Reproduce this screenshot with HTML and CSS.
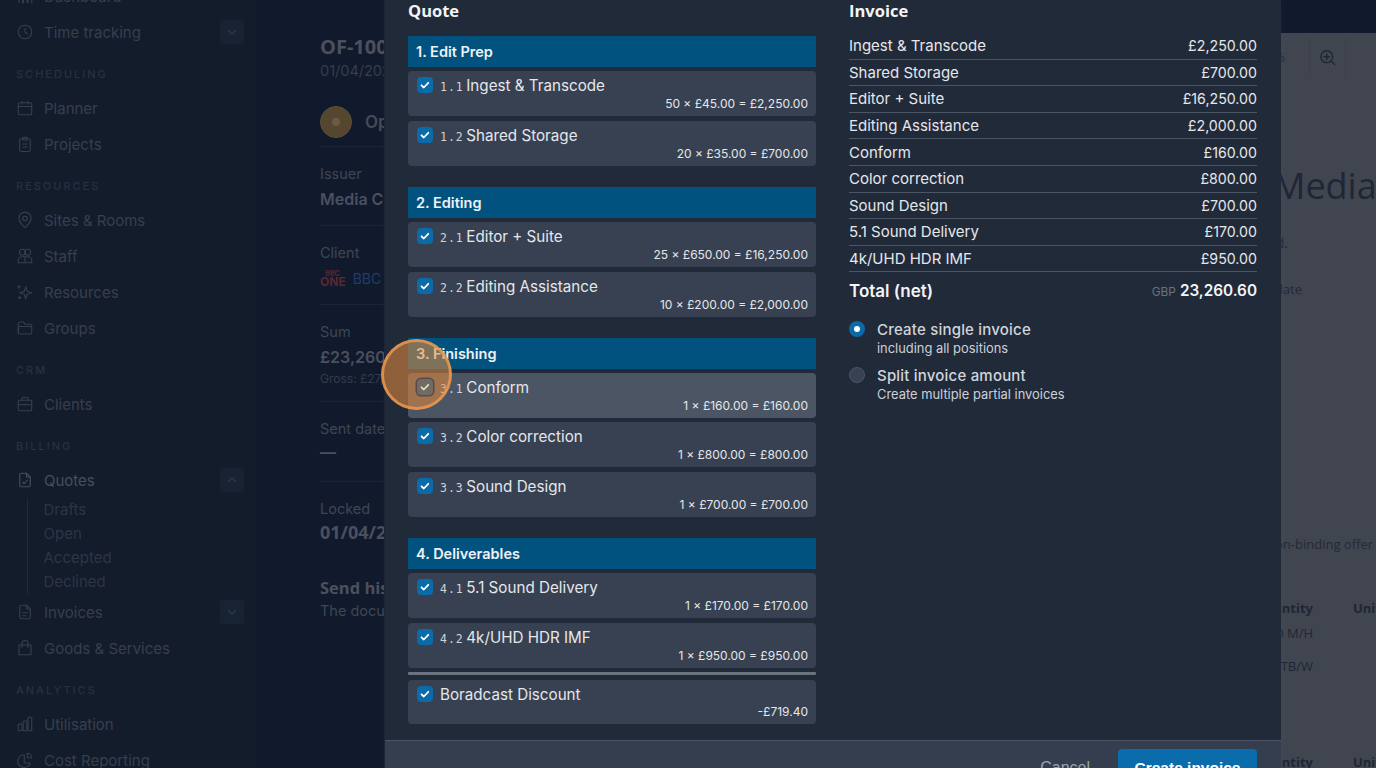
FILE: index.html
```html
<!DOCTYPE html>
<html lang="en">
<head>
<meta charset="utf-8">
<title>Create invoice</title>
<link rel="stylesheet" href="styles.css">
</head>
<body>
<div class="app">
  <aside class="sidebar">
    <div class="nav-item"><svg class="ico" viewBox="0 0 24 24"><path d="M4 21V10h5v11M10 21V4h5v17M16 21v-8h5v8"/></svg><span>Dashboard</span></div>
    <div class="nav-item"><svg class="ico" viewBox="0 0 24 24"><circle cx="12" cy="12" r="9"/><path d="M12 7v5l3 2"/></svg><span>Time tracking</span><b class="chev"><svg viewBox="0 0 24 24"><path d="M8 10l4 4 4-4"/></svg></b></div>
    <div class="nav-label">SCHEDULING</div>
    <div class="nav-item"><svg class="ico" viewBox="0 0 24 24"><rect x="3" y="5" width="18" height="16" rx="2"/><path d="M3 10h18M8 3v4M16 3v4"/></svg><span>Planner</span></div>
    <div class="nav-item"><svg class="ico" viewBox="0 0 24 24"><rect x="5" y="5" width="14" height="17" rx="2"/><rect x="9" y="3" width="6" height="4" rx="1"/><path d="M9 12h6M9 16h6"/></svg><span>Projects</span></div>
    <div class="nav-label">RESOURCES</div>
    <div class="nav-item"><svg class="ico" viewBox="0 0 24 24"><path d="M12 22s-8-7-8-12.5a8 8 0 0 1 16 0C20 15 12 22 12 22z"/><circle cx="12" cy="10" r="3"/></svg><span>Sites &amp; Rooms</span></div>
    <div class="nav-item"><svg class="ico" viewBox="0 0 24 24"><circle cx="8.5" cy="7" r="4"/><circle cx="15.5" cy="7" r="4"/><path d="M3 21v-3a5 5 0 0 1 5-5h8a5 5 0 0 1 5 5v3zM12 13v8"/></svg><span>Staff</span></div>
    <div class="nav-item"><svg class="ico" viewBox="0 0 24 24"><path d="M13 5l2 6 6 2-6 2-2 6-2-6-6-2 6-2z"/><path d="M4 3v4M2 5h4M5 18v3M3.5 19.5h3"/></svg><span>Resources</span></div>
    <div class="nav-item"><svg class="ico" viewBox="0 0 24 24"><path d="M3 18V6a2 2 0 0 1 2-2h5l2 3h7a2 2 0 0 1 2 2v1"/><rect x="3" y="10" width="18" height="10" rx="2"/></svg><span>Groups</span></div>
    <div class="nav-label">CRM</div>
    <div class="nav-item"><svg class="ico" viewBox="0 0 24 24"><rect x="3" y="7" width="18" height="14" rx="2"/><path d="M8 7V5a2 2 0 0 1 2-2h4a2 2 0 0 1 2 2v2M3 13h18"/><path d="M11 13h2"/></svg><span>Clients</span></div>
    <div class="nav-label">BILLING</div>
    <div class="nav-item nav-active"><svg class="ico" viewBox="0 0 24 24"><path d="M14 3H7a2 2 0 0 0-2 2v14a2 2 0 0 0 2 2h10a2 2 0 0 0 2-2V8z"/><path d="M14 3v5h5M9 15l2 2 4-5"/></svg><span>Quotes</span><b class="chev"><svg viewBox="0 0 24 24"><path d="M8 14l4-4 4 4"/></svg></b></div>
    <div class="sub-list">
      <div class="sub-item">Drafts</div>
      <div class="sub-item">Open</div>
      <div class="sub-item">Accepted</div>
      <div class="sub-item">Declined</div>
    </div>
    <div class="nav-item"><svg class="ico" viewBox="0 0 24 24"><path d="M14 3H7a2 2 0 0 0-2 2v14a2 2 0 0 0 2 2h10a2 2 0 0 0 2-2V8z"/><path d="M14 3v5h5M9 13h6M9 17h4"/></svg><span>Invoices</span><b class="chev"><svg viewBox="0 0 24 24"><path d="M8 10l4 4 4-4"/></svg></b></div>
    <div class="nav-item"><svg class="ico" viewBox="0 0 24 24"><path d="M4 8h16v13H4zM8 11V6a4 4 0 0 1 8 0v5"/></svg><span>Goods &amp; Services</span></div>
    <div class="nav-label">ANALYTICS</div>
    <div class="nav-item"><svg class="ico" viewBox="0 0 24 24"><rect x="3" y="12" width="5" height="9" rx="1"/><rect x="9.5" y="8" width="5" height="13" rx="1"/><rect x="16" y="3" width="5" height="18" rx="1"/></svg><span>Utilisation</span></div>
    <div class="nav-item"><svg class="ico" viewBox="0 0 24 24"><path d="M11 5a8.500 8.500 0 1 0 8 11h-8z"/><path d="M15 3a6 6 0 0 1 6 6h-6z"/></svg><span>Cost Reporting</span></div>
  </aside>

  <section class="details">
    <h1 class="d-title">OF-1001</h1>
    <div class="d-date">01/04/2024</div>
    <div class="d-status"><i class="avatar"><i class="avatar-dot"></i></i><span>Open</span></div>
    <div class="d-block"><div class="d-label">Issuer</div><div class="d-value">Media Company</div></div>
    <div class="d-block"><div class="d-label">Client</div><div class="d-logos"><span class="logo-one"><em>BBC</em>ONE</span><span class="logo-bbc">BBC One</span></div></div>
    <div class="d-block d-sum"><div class="d-label">Sum</div><div class="d-value">£23,260.60</div><div class="d-small">Gross: £27,912.72</div></div>
    <div class="d-block d-sent"><div class="d-label">Sent date</div><div class="d-value d-dash">—</div></div>
    <div class="d-locked"><div class="d-label">Locked</div><div class="d-open d-date-big">01/04/2024</div></div>
    <div class="d-history"><div class="d-open">Send history</div><div class="d-label">The document</div></div>
  </section>

  <section class="doc">
    <div class="doc-top"></div>
    <div class="doc-tools">
      <span class="tool-pct">100%</span>
      <span class="tool-zoom"><svg viewBox="0 0 24 24"><circle cx="11" cy="11" r="7.500"/><path d="M11 7.500v7M7.500 11h7M16.500 16.500L21 21"/></svg></span>
    </div>
    <div class="doc-name">Media Company</div>
    <div class="doc-line doc-l1">Company Ltd.</div>
    <div class="doc-line doc-l2">Quote date</div>
    <div class="doc-line doc-l3">This is a non-binding offer</div>
    <div class="doc-table">
      <div class="doc-row doc-head"><span>Quantity</span><span>Unit price</span></div>
      <div class="doc-row doc-r1"><span>50 M/H</span><span></span></div>
      <div class="doc-row doc-r2"><span>20 TB/W</span><span></span></div>
      <div class="doc-row doc-head doc-h2"><span>Quantity</span><span>Unit price</span></div>
    </div>
  </section>
</div>

<div class="modal">
  <div class="modal-body">
    <div class="col-quote">
      <h2 class="col-title">Quote</h2>

      <div class="group">
        <div class="group-head">1. Edit Prep</div>
        <div class="line"><i class="cb"><svg viewBox="0 0 16 16"><path d="M4.500 8.300l2.300 2.200 4.500-4.700"/></svg></i><div class="line-main"><code>1.1</code>Ingest &amp; Transcode</div><div class="line-amt">50 × £45.00 = £2,250.00</div></div>
        <div class="line"><i class="cb"><svg viewBox="0 0 16 16"><path d="M4.500 8.300l2.300 2.200 4.500-4.700"/></svg></i><div class="line-main"><code>1.2</code>Shared Storage</div><div class="line-amt">20 × £35.00 = £700.00</div></div>
      </div>

      <div class="group">
        <div class="group-head">2. Editing</div>
        <div class="line"><i class="cb"><svg viewBox="0 0 16 16"><path d="M4.500 8.300l2.300 2.200 4.500-4.700"/></svg></i><div class="line-main"><code>2.1</code>Editor + Suite</div><div class="line-amt">25 × £650.00 = £16,250.00</div></div>
        <div class="line"><i class="cb"><svg viewBox="0 0 16 16"><path d="M4.500 8.300l2.300 2.200 4.500-4.700"/></svg></i><div class="line-main"><code>2.2</code>Editing Assistance</div><div class="line-amt">10 × £200.00 = £2,000.00</div></div>
      </div>

      <div class="group">
        <div class="group-head">3. Finishing</div>
        <div class="line line-hover"><i class="cb cb-focus"><svg viewBox="0 0 16 16"><path d="M4.500 8.300l2.300 2.200 4.500-4.700"/></svg></i><div class="line-main"><code>3.1</code>Conform</div><div class="line-amt">1 × £160.00 = £160.00</div></div>
        <div class="line"><i class="cb"><svg viewBox="0 0 16 16"><path d="M4.500 8.300l2.300 2.200 4.500-4.700"/></svg></i><div class="line-main"><code>3.2</code>Color correction</div><div class="line-amt">1 × £800.00 = £800.00</div></div>
        <div class="line"><i class="cb"><svg viewBox="0 0 16 16"><path d="M4.500 8.300l2.300 2.200 4.500-4.700"/></svg></i><div class="line-main"><code>3.3</code>Sound Design</div><div class="line-amt">1 × £700.00 = £700.00</div></div>
      </div>

      <div class="group">
        <div class="group-head">4. Deliverables</div>
        <div class="line"><i class="cb"><svg viewBox="0 0 16 16"><path d="M4.500 8.300l2.300 2.200 4.500-4.700"/></svg></i><div class="line-main"><code>4.1</code>5.1 Sound Delivery</div><div class="line-amt">1 × £170.00 = £170.00</div></div>
        <div class="line"><i class="cb"><svg viewBox="0 0 16 16"><path d="M4.500 8.300l2.300 2.200 4.500-4.700"/></svg></i><div class="line-main"><code>4.2</code>4k/UHD HDR IMF</div><div class="line-amt">1 × £950.00 = £950.00</div></div>
      </div>

      <div class="group-rule"></div>
      <div class="line"><i class="cb"><svg viewBox="0 0 16 16"><path d="M4.500 8.300l2.300 2.200 4.500-4.700"/></svg></i><div class="line-main">Boradcast Discount</div><div class="line-amt">-£719.40</div></div>
    </div>

    <div class="col-invoice">
      <h2 class="col-title">Invoice</h2>
      <div class="inv-rows">
        <div class="inv-row"><span>Ingest &amp; Transcode</span><span class="inv-amt">£2,250.00</span></div>
        <div class="inv-row"><span>Shared Storage</span><span class="inv-amt">£700.00</span></div>
        <div class="inv-row"><span>Editor + Suite</span><span class="inv-amt">£16,250.00</span></div>
        <div class="inv-row"><span>Editing Assistance</span><span class="inv-amt">£2,000.00</span></div>
        <div class="inv-row"><span>Conform</span><span class="inv-amt">£160.00</span></div>
        <div class="inv-row"><span>Color correction</span><span class="inv-amt">£800.00</span></div>
        <div class="inv-row"><span>Sound Design</span><span class="inv-amt">£700.00</span></div>
        <div class="inv-row"><span>5.1 Sound Delivery</span><span class="inv-amt">£170.00</span></div>
        <div class="inv-row"><span>4k/UHD HDR IMF</span><span class="inv-amt">£950.00</span></div>
      </div>
      <div class="inv-total"><span>Total (net)</span><span class="inv-sum"><small>GBP</small>23,260.60</span></div>
      <div class="opt">
        <i class="radio radio-on"></i>
        <div><div class="opt-title">Create single invoice</div><div class="opt-sub">including all positions</div></div>
      </div>
      <div class="opt">
        <i class="radio"></i>
        <div><div class="opt-title">Split invoice amount</div><div class="opt-sub">Create multiple partial invoices</div></div>
      </div>
    </div>
  </div>
  <div class="modal-foot">
    <span class="btn-cancel">Cancel</span>
    <span class="btn-primary">Create invoice</span>
  </div>
</div>

<div class="cursor-ring"></div>
</body>
</html>
```
FILE: styles.css
```css
* { box-sizing: border-box; }
html, body { margin: 0; padding: 0; width: 1376px; height: 768px; overflow: hidden; background: #111a2c; }
body { position: relative; font-family: Inter, "Noto Sans", sans-serif; }

.app { display: flex; height: 768px; overflow: hidden; }

/* sidebar */
.sidebar { flex: 0 0 256px; background: #131c2b; margin-top: -22px; height: 790px; padding: 0 12px 0 16px; color: #373f4e; font-size: 15px; }
.nav-item { height: 36px; display: flex; align-items: center; gap: 10px; position: relative; }
.nav-active { color: #474e5c; }
.ico { width: 18px; height: 18px; flex: none; fill: none; stroke: #373f4e; stroke-width: 1.5; stroke-linecap: round; stroke-linejoin: round; }
.nav-active .ico { stroke: #474e5c; }
.chev { position: absolute; left: 204px; top: 6px; width: 24px; height: 24px; background: #172232; border-radius: 3px; }
.chev svg { display: block; width: 24px; height: 24px; fill: none; stroke: #2e3948; stroke-width: 1.5; }
.nav-label { height: 40px; padding-top: 16px; font-size: 11px; line-height: 16px; letter-spacing: 2px; color: #283141; font-weight: 500; }
.sub-list { margin-left: 11px; border-left: 1.500px solid #212a39; padding-left: 15.500px; }
.sub-item { height: 24px; line-height: 24px; color: #2d3545; }

/* details column */
.details { flex: 0 0 129px; background: #111a2d; padding: 34px 0 0 64px; color: #3f4653; overflow: hidden; white-space: nowrap; font-size: 14.500px; }
.d-title { margin: 0; font-family: "Open Sans", sans-serif; font-size: 20px; line-height: 26px; font-weight: 700; color: #4a505e; }
.d-date { font-size: 14.500px; line-height: 22px; color: #363d4b; }
.d-status { display: flex; align-items: center; gap: 13px; margin-top: 16px; font-weight: 600; font-size: 17px; color: #454b58; height: 48px; box-sizing: content-box; border-bottom: 1px solid #1b2434; width: 300px; }
.avatar { width: 32px; height: 32px; border-radius: 50%; background: #55462f; border: 1px solid #5f4e34; display: flex; align-items: center; justify-content: center; }
.avatar-dot { width: 8px; height: 8px; border-radius: 50%; background: #6b5a44; }
.d-block { height: 79px; padding-top: 16px; border-bottom: 1px solid #1b2434; width: 300px; }
.d-label { font-size: 14.500px; line-height: 22px; color: #3f4653; }
.d-value { font-size: 16px; line-height: 28px; font-weight: 600; color: #4a505e; }
.d-dash { line-height: 24px; }
.d-logos { display: flex; gap: 7px; align-items: center; height: 28px; }
.logo-one { display: flex; flex-direction: column; font-size: 12px; line-height: 10px; font-weight: 700; color: #5a2630; }
.logo-one em { font-size: 7px; line-height: 7px; font-style: normal; text-align: center; width: 25px; }
.logo-bbc { font-size: 14px; color: #1f3d66; }
.d-sum { height: 97px; }
.d-small { font-size: 12px; line-height: 16px; color: #333a49; }
.d-sent { height: 80px; }
.d-locked { padding-top: 16px; }
.d-open { font-family: "Open Sans", sans-serif; font-weight: 700; font-size: 16.500px; line-height: 24px; color: #4a505e; }
.d-date-big { font-size: 18px; }
.d-history { margin-top: 32px; }

/* document */
.doc { flex: 1 1 auto; background: #414550; position: relative; overflow: hidden; white-space: nowrap; color: #1f2635; font-family: "Open Sans", sans-serif; padding-top: 33px; }
.doc-top { height: 33px; background: #111a2c; margin-top: -33px; }
.doc-tools { display: flex; justify-content: flex-end; align-items: center; height: 48px; padding-right: 30px; color: #232a39; font-size: 13px; }
.tool-pct { padding-right: 24px; }
.tool-zoom { width: 37px; height: 39px; border-left: 1px solid #3c404b; border-right: 1px solid #3c404b; display: flex; align-items: center; justify-content: center; }
.tool-zoom svg { width: 19px; height: 19px; fill: none; stroke: #1f2635; stroke-width: 1.7; stroke-linecap: round; }
.doc-name { font-size: 36px; line-height: 48px; margin: 81px 0 0 888px; color: #1f2635; }
.doc-line { font-size: 13px; line-height: 18px; color: #232a39; text-align: right; }
.doc-l1 { margin-top: 24px; padding-right: 88px; font-size: 14px; }
.doc-l2 { margin-top: 28px; padding-right: 74px; }
.doc-l3 { margin-top: 237px; padding-right: 3px; }
.doc-table { margin-top: 46px; font-size: 13px; margin-left: 600px; }
.doc-row { display: grid; grid-template-columns: 328px 100px; column-gap: 40px; height: 33px; line-height: 18px; }
.doc-row span:first-child { text-align: right; }
.doc-head { font-weight: 700; height: 25px; }
.doc-r1 { height: 33px; }
.doc-r2 { height: 96px; }

/* modal */
.modal { position: absolute; left: 385px; top: 0; width: 896px; background: #212a39; box-shadow: -1px 0 0 #1c2535, 0 0 8px rgba(255,255,255,.04); }
.modal-body { display: flex; gap: 33px; padding: 0 24px 16px 23px; height: 740px; }
.col-quote { flex: 0 0 408px; display: flex; flex-direction: column; }
.col-invoice { flex: 0 0 408px; }
.col-title { margin: 0 0 14px; font-family: "Open Sans", sans-serif; font-size: 16.500px; line-height: 22px; font-weight: 700; color: #f3f4f6; }

.group { display: flex; flex-direction: column; gap: 4.700px; margin-bottom: 21.200px; }
.group-head { height: 31px; margin-bottom: -.700px; background: #01527f; color: #eef2f6; font-size: 14.500px; font-weight: 600; line-height: 31px; padding-left: 8px; }
.line { position: relative; height: 45px; background: #374151; border-radius: 4px; padding: 6px 8px 0 32px; color: #e5e7eb; }
.line-hover { background: #4b5563; }
.line-main { font-size: 15.200px; line-height: 18px; white-space: nowrap; }
.line-main code { font-family: "DejaVu Sans Mono", monospace; font-size: 11.500px; letter-spacing: 1px; color: #cfd4dc; margin-right: 2.500px; }
.line-amt { position: absolute; right: 8px; bottom: 4px; font-size: 12px; line-height: 16px; color: #e5e7eb; }
.cb { position: absolute; left: 9px; top: 6px; width: 16px; height: 16px; background: #0b6aa8; border-radius: 4px; display: block; }
.cb svg { display: block; width: 16px; height: 16px; fill: none; stroke: #fff; stroke-width: 1.800; stroke-linecap: round; stroke-linejoin: round; }
.cb-focus { background: #6f6b67; box-shadow: 0 0 0 1.500px #5d4a44; z-index: 2; }
.cb-focus svg { stroke: #f0d5b8; }
.group-rule { height: 3px; margin: -17px 0 5px; background: #6b7280; border-radius: 1px; }

.inv-rows { display: flex; flex-direction: column; margin-top: -3px; }
.inv-row { height: 26.600px; display: flex; justify-content: space-between; align-items: center; font-size: 15px; color: #e5e7eb; border-bottom: 1px solid #4b5563; white-space: nowrap; }
.inv-amt { font-size: 14.200px; }
.inv-total { display: flex; justify-content: space-between; align-items: center; margin-top: 5px; height: 27px; font-size: 17px; font-weight: 600; color: #f3f4f6; }
.inv-sum { font-size: 15.300px; }
.inv-sum small { font-size: 11.800px; font-weight: 400; color: #6b7280; margin-right: 4px; }
.opt { display: flex; gap: 12px; height: 46px; }
.inv-total + .opt { margin-top: 16px; }
.radio { flex: none; width: 16px; height: 16px; border-radius: 50%; background: #374151; border: 1px solid #4b5563; margin-top: 1px; }
.radio-on { background: #0b6aa8; border: 5px solid #0b6aa8; position: relative; }
.radio-on::after { content: ""; display: block; width: 6px; height: 6px; background: #fff; border-radius: 50%; }
.opt-title { font-size: 15px; line-height: 19px; font-weight: 500; letter-spacing: .2px; color: #d1d5db; }
.opt-sub { font-size: 12.900px; line-height: 19px; color: #cbd0d8; }

.modal-foot { height: 60px; background: #353e4e; border-top: 1px solid #4b5563; display: flex; justify-content: flex-end; align-items: flex-start; gap: 28px; padding: 8px 24px 0 0; }
.btn-cancel { font-family: "Liberation Sans", sans-serif; font-size: 16px; line-height: 38px; color: #9ca3af; }
.btn-primary { width: 139px; height: 40px; background: #0a6cab; color: #fff; border-radius: 4px; text-align: center; font-family: "Liberation Sans", sans-serif; font-size: 15.500px; font-weight: 700; line-height: 38px; }

.cursor-ring { position: absolute; z-index: 1; left: 381px; top: 339px; width: 71px; height: 71px; border-radius: 50%; background: rgba(232,140,62,.55); border: 3px solid rgba(240,155,80,.8); }
```
